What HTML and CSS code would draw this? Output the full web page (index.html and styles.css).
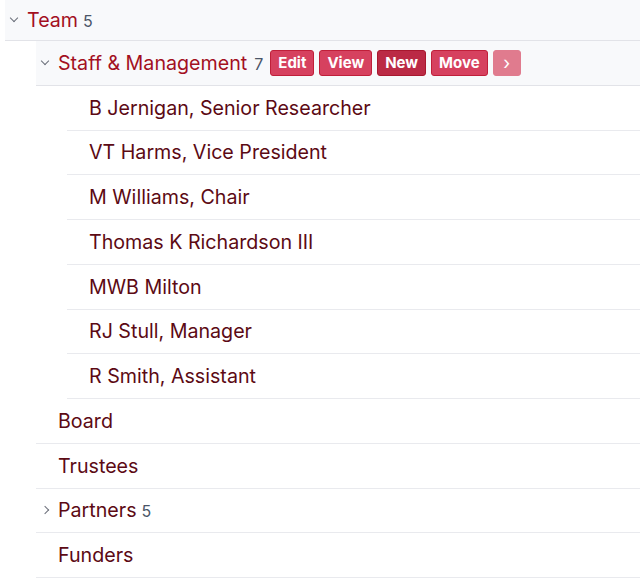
FILE: index.html
```html
<!DOCTYPE html>
<html lang="en">
<head>
    <meta charset="UTF-8">
    <title>Team</title>
    <link rel="stylesheet" href="styles.css">
</head>
<body>
    <ul class="tree">
        <li class="node open">
            <div class="row row-top">
                <span class="chev down"></span>
                <span class="label heading">Team</span>
                <span class="count">5</span>
            </div>
            <ul class="tree">
                <li class="node open">
                    <div class="row row-group">
                        <span class="chev down"></span>
                        <span class="label heading">Staff &amp; Management</span>
                        <span class="count">7</span>
                        <span class="actions">
                            <button class="btn">Edit</button>
                            <button class="btn">View</button>
                            <button class="btn btn-dark">New</button>
                            <button class="btn">Move</button>
                            <button class="btn btn-light">&rsaquo;</button>
                        </span>
                    </div>
                    <ul class="tree">
                        <li class="node"><div class="row"><span class="chev"></span><span class="label">B Jernigan, Senior Researcher</span></div></li>
                        <li class="node"><div class="row"><span class="chev"></span><span class="label">VT Harms, Vice President</span></div></li>
                        <li class="node"><div class="row"><span class="chev"></span><span class="label">M Williams, Chair</span></div></li>
                        <li class="node"><div class="row"><span class="chev"></span><span class="label">Thomas K Richardson III</span></div></li>
                        <li class="node"><div class="row"><span class="chev"></span><span class="label">MWB Milton</span></div></li>
                        <li class="node"><div class="row"><span class="chev"></span><span class="label">RJ Stull, Manager</span></div></li>
                        <li class="node"><div class="row"><span class="chev"></span><span class="label">R Smith, Assistant</span></div></li>
                    </ul>
                </li>
                <li class="node"><div class="row"><span class="chev"></span><span class="label">Board</span></div></li>
                <li class="node"><div class="row"><span class="chev"></span><span class="label">Trustees</span></div></li>
                <li class="node">
                    <div class="row">
                        <span class="chev right"></span>
                        <span class="label">Partners</span>
                        <span class="count">5</span>
                    </div>
                </li>
                <li class="node"><div class="row"><span class="chev"></span><span class="label">Funders</span></div></li>
            </ul>
        </li>
    </ul>
</body>
</html>
```

FILE: styles.css
```css
body {
    margin: 0;
    background: #ffffff;
    font-family: 'Inter', 'Noto Sans', sans-serif;
    color: #5c0a14;
}

.tree {
    list-style: none;
    margin: 0;
    padding: 0;
}

.tree .tree {
    padding-left: 31px;
}

/* top level sits 5px in from the edge */
body > .tree {
    padding-left: 5px;
}

.row {
    display: flex;
    align-items: center;
    height: 43.75px;
    padding-left: 5px;
    border-bottom: 1px solid #e9eaee;
    font-size: 19.65px;
}

.row-top {
    height: 40px;
    background: #f8f9fb;
    border-bottom-color: #e2e3e8;
}

.row-group {
    background: #f8f9fb;
    border-bottom-color: #e2e3e8;
}

.chev {
    width: 17px;
    flex: none;
    display: inline-flex;
    justify-content: flex-start;
    align-items: center;
}

.chev.down::before,
.chev.right::before {
    content: "";
    width: 5px;
    height: 5px;
    border-right: 1.3px solid #6b6f7a;
    border-bottom: 1.3px solid #6b6f7a;
    margin-left: 1px;
}

.chev.down::before {
    transform: translateY(-2px) rotate(45deg);
}

.chev.right::before {
    transform: rotate(-45deg);
}

.label {
    white-space: nowrap;
}

.heading {
    color: #a3101f;
}

.count {
    margin-left: 5px;
    font-size: 16px;
    color: #4a5568;
    padding-top: 2px;
}

.row-group .count {
    margin-left: 7px;
}

.actions {
    display: flex;
    gap: 5px;
    margin-left: 7px;
}

.btn {
    font-family: inherit;
    font-size: 15px;
    font-weight: 700;
    color: #ffffff;
    background: #d6415f;
    border: 1px solid #c01f3a;
    border-radius: 3px;
    height: 26px;
    padding: 0 7px;
    line-height: 24px;
}

.btn-dark {
    background: #bb2a45;
    border-color: #a8182f;
}

.btn-light {
    background: #e07b8e;
    border-color: #e07b8e;
    width: 28px;
    font-size: 18px;
    font-weight: 400;
}
```
